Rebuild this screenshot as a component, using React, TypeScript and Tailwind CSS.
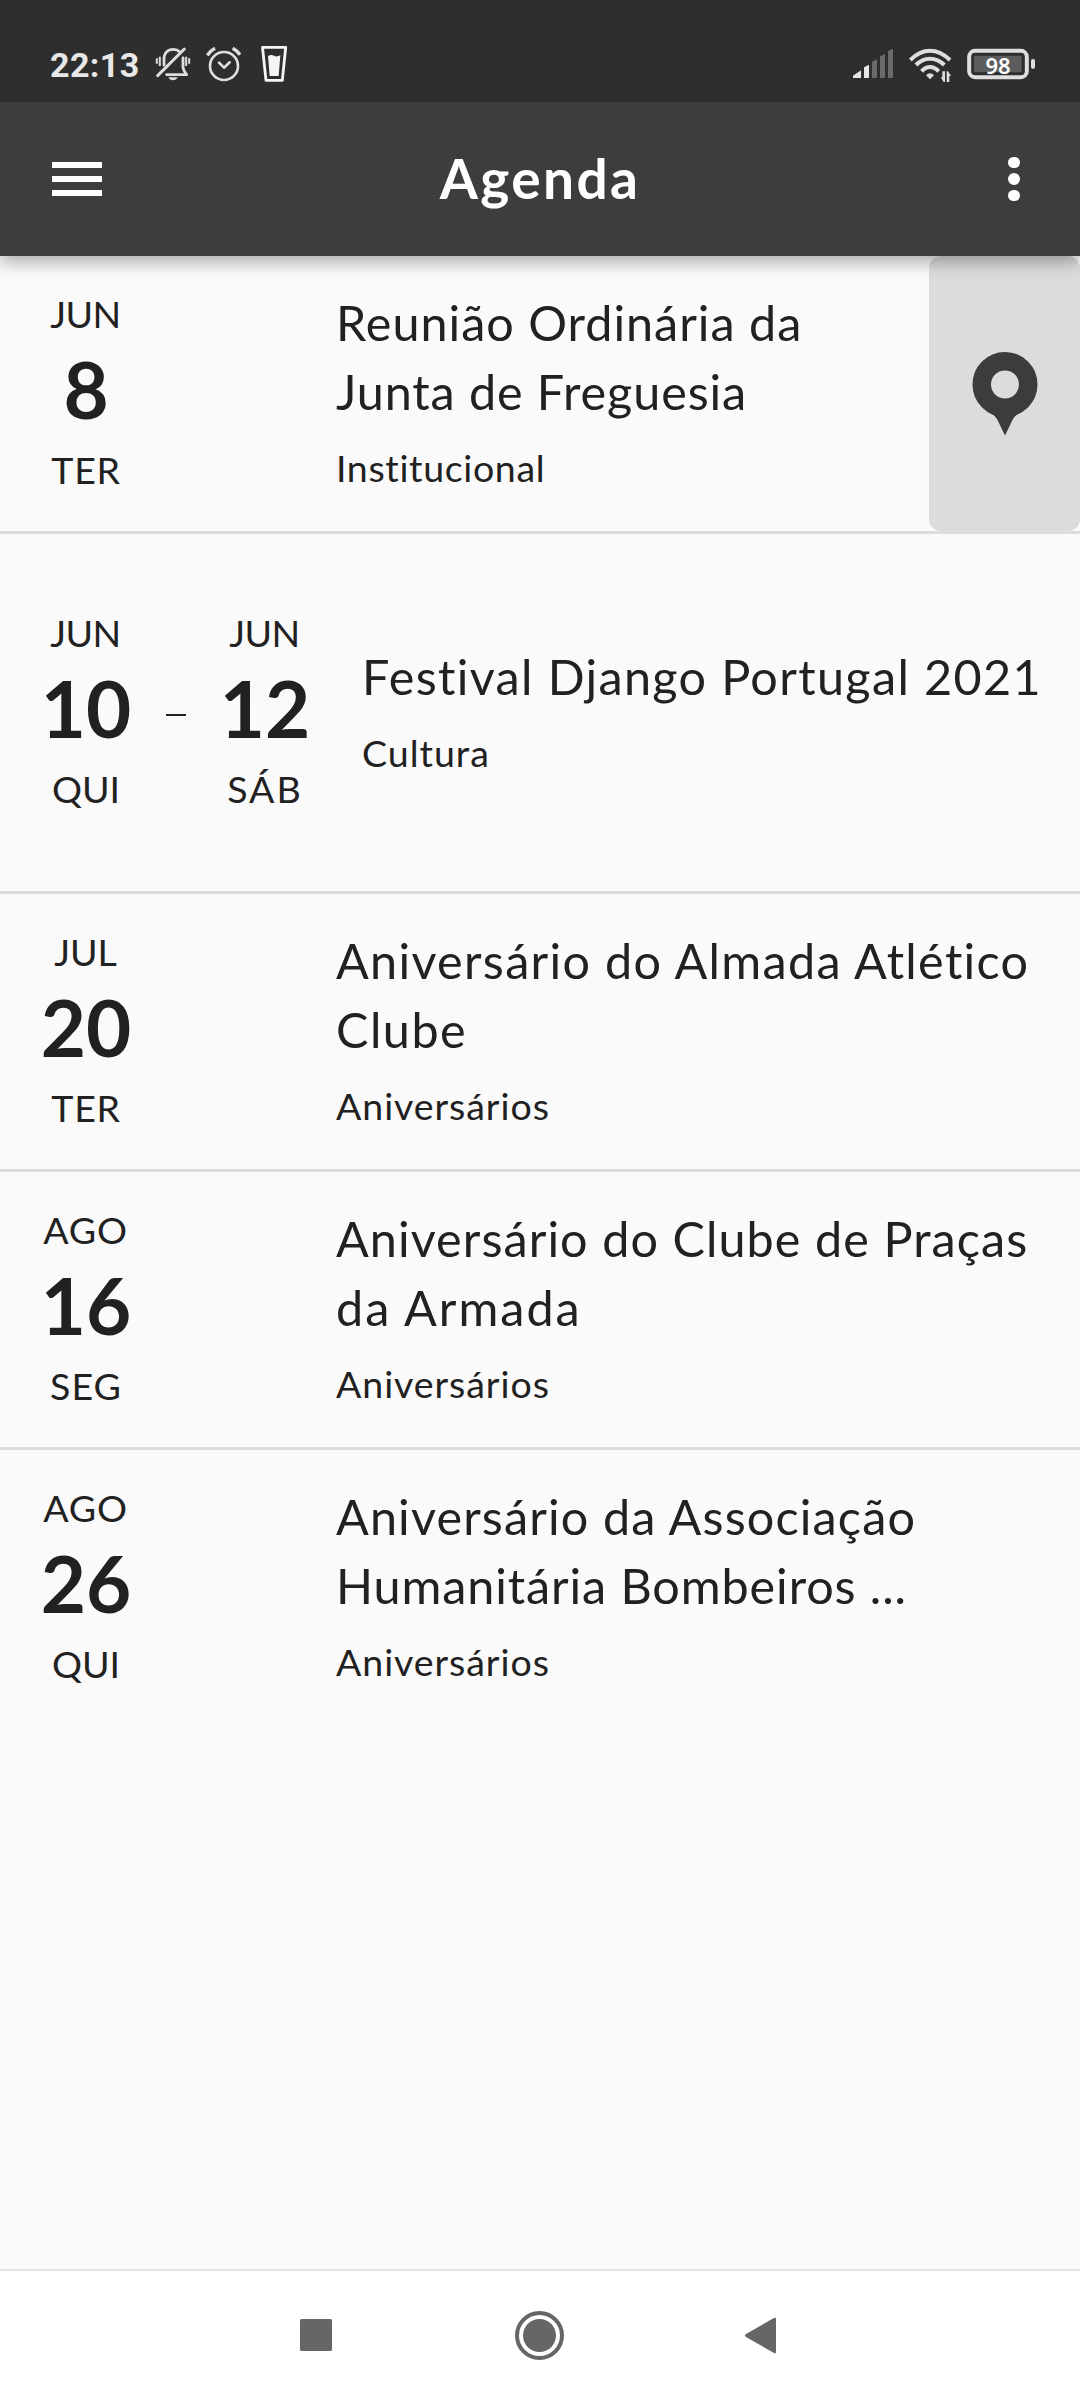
import React from "react";

interface TextLine {
  text: string;
  tracking: string;
}

interface DateInfo {
  month: TextLine;
  day: string;
  weekday: TextLine;
}

interface AgendaEvent {
  start: DateInfo;
  end?: DateInfo;
  title: TextLine[];
  category: TextLine;
  hasLocation?: boolean;
}

const JUN = { text: "JUN", tracking: "tracking-[-0.6px]" };
const JUL = { text: "JUL", tracking: "tracking-normal" };
const AGO = { text: "AGO", tracking: "tracking-[0.8px]" };
const TER = { text: "TER", tracking: "tracking-[0.7px]" };
const QUI = { text: "QUI", tracking: "tracking-normal" };
const SAB = { text: "SÁB", tracking: "tracking-[2px]" };
const SEG = { text: "SEG", tracking: "tracking-[1px]" };

const events: AgendaEvent[] = [
  {
    start: { month: JUN, day: "8", weekday: TER },
    title: [
      { text: "Reunião Ordinária da", tracking: "tracking-[1px]" },
      { text: "Junta de Freguesia", tracking: "tracking-[0.9px]" },
    ],
    category: { text: "Institucional", tracking: "tracking-[0.65px]" },
    hasLocation: true,
  },
  {
    start: { month: JUN, day: "10", weekday: QUI },
    end: { month: JUN, day: "12", weekday: SAB },
    title: [{ text: "Festival Django Portugal 2021", tracking: "tracking-[1.36px]" }],
    category: { text: "Cultura", tracking: "tracking-[1px]" },
  },
  {
    start: { month: JUL, day: "20", weekday: TER },
    title: [
      { text: "Aniversário do Almada Atlético", tracking: "tracking-[1.32px]" },
      { text: "Clube", tracking: "tracking-[1.5px]" },
    ],
    category: { text: "Aniversários", tracking: "tracking-[0.95px]" },
  },
  {
    start: { month: AGO, day: "16", weekday: SEG },
    title: [
      { text: "Aniversário do Clube de Praças", tracking: "tracking-[1.08px]" },
      { text: "da Armada", tracking: "tracking-[2px]" },
    ],
    category: { text: "Aniversários", tracking: "tracking-[0.95px]" },
  },
  {
    start: { month: AGO, day: "26", weekday: QUI },
    title: [
      { text: "Aniversário da Associação", tracking: "tracking-[1.15px]" },
      { text: "Humanitária Bombeiros ...", tracking: "tracking-[0.9px]" },
    ],
    category: { text: "Aniversários", tracking: "tracking-[0.95px]" },
  },
];

function StatusBar() {
  return (
    <div className="relative z-20 flex h-[102px] shrink-0 items-start justify-between bg-[#2e2e2e] text-[#e8e8e8]">
      <div className="flex pt-[30px] pl-[50px]">
        <span className="w-[100px] pt-[15px] font-[Roboto] text-[34px] leading-[40px] font-bold tracking-[0.4px]">22:13</span>
        {/* Muted bell, alarm and cup */}
        <svg className="h-[70px] w-[150px]" viewBox="360 0 450 210" fill="none" stroke="#dedede" strokeLinecap="round" strokeLinejoin="round">
          <path d="M402 105V88C402 70 413 58 430 58C438 58 444 60 449 65M459 84V112C460 122 466 128 470 134H410" strokeWidth="8.5" />
          <path d="M383 137L463 57" strokeWidth="9" />
          <path d="M380.500 85V101M389.500 80V108M468.500 80V108M477.500 85V101" strokeWidth="6" strokeLinecap="butt" />
          <path d="M415 142H443C440 148 436 151 429 151S418 148 415 142Z" fill="#dedede" stroke="none" />
          <circle cx="582" cy="108" r="42" strokeWidth="8" />
          <path d="M567 98L582 113L599 97" strokeWidth="8" />
          <path d="M532 76Q541 62 555 55M608 55Q621 62 630 74" strokeWidth="10" strokeLinecap="butt" />
          <path d="M697.500 52H767L757 151H708Z" stroke="#f5f5f5" strokeWidth="8.5" />
          <path d="M714 78Q724 72 732 77T751 76L746 138H719Z" fill="#f5f5f5" stroke="none" />
        </svg>
      </div>
      <div className="relative mt-[30px] mr-[20px] h-[70px] w-[230px]">
        {/* Signal, wifi and battery */}
        <svg className="h-full w-full" viewBox="0 0 690 210" fill="none">
          <path d="M69 144V137L93 121V144ZM102 144V112L117 104V144Z" fill="#e6e6e6" />
          <path d="M126 144V95L141 88V144ZM150 144V79L165 72V144ZM174 144V63L189 56V144Z" fill="#6b6b6b" />
          <path d="M241 90Q268 62 300 62T360 90M258 105Q276 86 300 86T343 105M275 124Q286 111 300 111T326 124" stroke="#dedede" strokeWidth="12" />
          <path d="M288 136Q300 124 312 136L300 148Z" fill="#dedede" />
          <path d="M345 124V156H341L332 142H337V124ZM350 156V124H354L363 138H358V156Z" fill="#dedede" />
          <rect x="432" y="77" width="143" height="50" rx="5" fill="#5c5c5c" />
          <rect x="417.500" y="62.500" width="173" height="79" rx="18" stroke="#dedede" strokeWidth="12" />
          <rect x="603" y="87" width="12" height="29" rx="5" fill="#dedede" />
        </svg>
        <span className="absolute top-[22px] left-[137px] w-[62px] text-center font-[Noto_Sans] text-[22px] leading-[26px] font-semibold text-white">98</span>
      </div>
    </div>
  );
}

function AppBar() {
  return (
    <header className="relative z-10 flex h-[154px] shrink-0 items-center justify-between bg-[#3d3d3d] pr-[60px] pl-[52px] text-white shadow-[0_6px_16px_rgba(0,0,0,0.32)]">
      <button className="flex w-[50px] flex-col gap-2">
        <span className="h-[6px] bg-white" />
        <span className="h-[6px] bg-white" />
        <span className="h-[6px] bg-white" />
      </button>
      <h1 className="pr-[30px] pb-[3px] text-[55px] leading-[64px] font-bold tracking-[2.4px]">Agenda</h1>
      <button className="flex w-[12px] flex-col items-center gap-[5px]">
        <span className="size-[11.5px] rounded-full bg-white" />
        <span className="size-[11.5px] rounded-full bg-white" />
        <span className="size-[11.5px] rounded-full bg-white" />
      </button>
    </header>
  );
}

function DateColumn({ date }: { date: DateInfo }) {
  return (
    <div className="flex w-[92px] flex-col items-center whitespace-nowrap">
      <span className={`pr-px text-[37.5px] leading-[52px] ${date.month.tracking}`}>{date.month.text}</span>
      <span className="text-[78px] leading-[98px] font-bold">{date.day}</span>
      <span className={`mt-[6px] text-[37.5px] leading-[52px] ${date.weekday.tracking}`}>{date.weekday.text}</span>
    </div>
  );
}

function EventRow({ event }: { event: AgendaEvent }) {
  return (
    <li
      className={`flex border-b-[3px] border-[#dcdcdc] last:h-[275px] last:border-b-0 ${event.end ? "h-[360px]" : "h-[278px]"}`}
    >
      <div className={`flex items-center pb-[3px] pl-10 ${event.end ? "w-[362px]" : "w-[336px]"}`}>
        <DateColumn date={event.start} />
        {event.end && (
          <>
            <div className="flex w-[87px] justify-center">
              <span className="mt-[7px] h-[2px] w-[20px] bg-[#212121]" />
            </div>
            <DateColumn date={event.end} />
          </>
        )}
      </div>
      <div className="flex flex-1 flex-col justify-center pb-[5px] whitespace-nowrap">
        {event.title.map((line) => (
          <p key={line.text} className={`text-[48.5px] leading-[69px] ${line.tracking}`}>
            {line.text}
          </p>
        ))}
        <p className={`mt-4 text-[37.5px] leading-[52px] ${event.category.tracking}`}>{event.category.text}</p>
      </div>
      {event.hasLocation && (
        <button className="flex w-[151px] items-center justify-center rounded-xl bg-[#dcdcdc]">
          <svg className="h-[84px] w-[66px]" viewBox="0 0 66 84" fill="#3c3c3b">
            <circle cx="33" cy="32.500" r="23.250" fill="none" stroke="#3c3c3b" strokeWidth="18.500" />
            <path d="M18 60C22 63 24 65 26 69L33 83.500L40 69C42 65 44 63 48 60L33 52Z" />
          </svg>
        </button>
      )}
    </li>
  );
}

function NavigationBar() {
  return (
    <nav className="flex h-[131px] shrink-0 items-center justify-center border-t-2 border-[#e4e4e4] bg-white pb-px">
      <svg className="h-[60px] w-[500px]" viewBox="290 2305 500 60" fill="#666666">
        <rect x="300" y="2319" width="32" height="32" rx="1.500" />
        <circle cx="539.500" cy="2335.500" r="22.500" fill="none" stroke="#666666" strokeWidth="4" />
        <circle cx="539.500" cy="2335.500" r="16.500" />
        <path d="M776 2319V2352Q776 2354 774 2353L746 2337Q744 2335.500 746 2334L774 2318Q776 2317 776 2319Z" />
      </svg>
    </nav>
  );
}

export default function App() {
  return (
    <div className="flex h-[2400px] w-[1080px] flex-col overflow-hidden bg-[#fafafa] font-[Lato,sans-serif] text-[#212121]">
      <StatusBar />
      <AppBar />
      <ul className="flex-1">
        {events.map((event) => (
          <EventRow key={event.title[0].text} event={event} />
        ))}
      </ul>
      <NavigationBar />
    </div>
  );
}
